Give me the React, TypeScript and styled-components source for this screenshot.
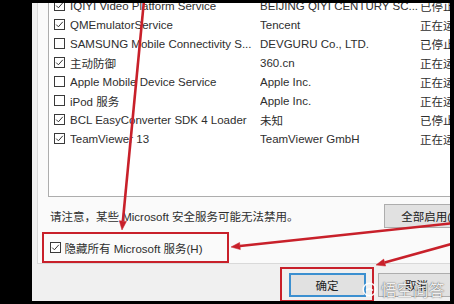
import React from "react";
import styled, { createGlobalStyle } from "styled-components";

const RED = "#c8202a";

const GlobalStyle = createGlobalStyle`
  html, body {
    margin: 0;
    padding: 0;
    background: #000;
  }
  body {
    font-family: "Liberation Sans", "Noto Sans CJK SC", sans-serif;
  }
`;

// black photo border around the cropped dialog
const Screen = styled.div`
  width: 454px;
  height: 304px;
  box-sizing: border-box;
  padding: 3px 4px 3px 32px;
  background: #000;
  overflow: hidden;
`;

const Dialog = styled.div`
  position: relative;
  width: 418px;
  height: 298px;
  overflow: hidden;
  background: #f0f0f0;
  color: #2e2e2e;
  font-size: 11.5px;
`;

const Frame = styled.div`
  width: 459px;
  display: flex;
  flex-direction: column;
`;

const TabPage = styled.div`
  margin-left: 5px;
  height: 261px;
  box-sizing: border-box;
  background: #fafafa;
  border: 1px solid #d9d9d9;
  border-top: none;
  padding: 0 10px;
  display: flex;
  flex-direction: column;
`;

const List = styled.div`
  flex-shrink: 0;
  margin-top: -8px;
  height: 202px;
  box-sizing: border-box;
  background: #fff;
  border: 1px solid #adadad;
`;

const Row = styled.div`
  display: grid;
  grid-template-columns: 16px 190px 160px 1fr;
  align-items: center;
  height: 19px;
  padding-left: 5px;
  white-space: nowrap;
`;

const Cell = styled.span`
  overflow: hidden;
`;

const Box = styled.span`
  display: inline-flex;
  align-items: center;
  justify-content: center;
  width: 11px;
  height: 11px;
  box-sizing: border-box;
  border: 1px solid #3a3a3a;
  background: #fff;
`;

const NoteRow = styled.div`
  flex-shrink: 0;
  margin-top: 7px;
  height: 24px;
  display: flex;
  align-items: center;
  justify-content: space-between;
  padding-left: 2px;
`;

const PushButton = styled.div<{ $primary?: boolean; $width: number }>`
  width: ${(p) => p.$width}px;
  height: 24px;
  box-sizing: border-box;
  display: flex;
  align-items: center;
  justify-content: center;
  flex-shrink: 0;
  background: #e1e1e1;
  border: ${(p) => (p.$primary ? "2px solid #3b8fd0" : "1px solid #adadad")};
  color: #222;
  white-space: nowrap;
`;

// red annotation frames drawn on the screenshot
const Highlight = styled.div`
  box-sizing: border-box;
  border: 2.5px solid ${RED};
  display: flex;
  align-items: center;
`;

const HideMsRow = styled(Highlight)`
  margin-top: 4px;
  margin-left: -6px;
  width: 187px;
  height: 31px;
  padding-left: 5.5px;
  gap: 4px;
`;

const OkFrame = styled(Highlight)`
  padding: 3.5px 6.5px;
`;

const Footer = styled.div`
  display: flex;
  align-items: center;
  gap: 4px;
  padding: 3px 0 0 248px;
`;

const Overlay = styled.svg`
  position: absolute;
  left: 0;
  top: 0;
  pointer-events: none;
`;

const Watermark = styled.div`
  position: absolute;
  left: 330px;
  top: 275px;
  display: flex;
  align-items: center;
  gap: 4px;
  color: rgba(255, 255, 255, 0.92);
  font-family: "Noto Sans CJK SC", sans-serif;
  font-size: 15.5px;
  letter-spacing: 0.5px;
  text-shadow: 0 0 1px rgba(0, 0, 0, 0.6), 0 0 2px rgba(0, 0, 0, 0.35);
`;

const Check = ({ on }: { on: boolean }) => (
  <Box>
    {on && (
      <svg width="9" height="9" viewBox="0 0 9 9">
        <polyline points="1.2,4.6 3.4,6.8 7.8,1.8" fill="none" stroke="#333" strokeWidth="1" />
      </svg>
    )}
  </Box>
);

const services = [
  { on: true, name: "IQIYI Video Platform Service", maker: "BEIJING QIYI CENTURY SC...", state: "已停止" },
  { on: true, name: "QMEmulatorService", maker: "Tencent", state: "正在运行" },
  { on: false, name: "SAMSUNG Mobile Connectivity S...", maker: "DEVGURU Co., LTD.", state: "已停止" },
  { on: true, name: "主动防御", maker: "360.cn", state: "正在运行" },
  { on: false, name: "Apple Mobile Device Service", maker: "Apple Inc.", state: "正在运行" },
  { on: false, name: "iPod 服务", maker: "Apple Inc.", state: "正在运行" },
  { on: true, name: "BCL EasyConverter SDK 4 Loader", maker: "未知", state: "已停止" },
  { on: true, name: "TeamViewer 13", maker: "TeamViewer GmbH", state: "正在运行" },
];

// straight red arrow, head at (x2, y2)
const Arrow = ({ x1, y1, x2, y2 }: { x1: number; y1: number; x2: number; y2: number }) => {
  const len = Math.hypot(x2 - x1, y2 - y1);
  const ux = (x2 - x1) / len;
  const uy = (y2 - y1) / len;
  const bx = x2 - ux * 9;
  const by = y2 - uy * 9;
  const nx = -uy * 3.6;
  const ny = ux * 3.6;
  return (
    <g fill={RED} stroke={RED}>
      <line x1={x1} y1={y1} x2={bx} y2={by} strokeWidth="2.6" />
      <polygon points={`${x2},${y2} ${bx + nx},${by + ny} ${bx - nx},${by - ny}`} strokeWidth="0.5" />
    </g>
  );
};

const WukongLogo = () => (
  <svg width="15" height="15" viewBox="0 0 15 15">
    <circle cx="7.5" cy="7.5" r="6.3" fill="none" stroke="rgba(255,255,255,0.9)" strokeWidth="1.6" />
    <path d="M4 8.6 Q7.5 5 11 8.6" fill="none" stroke="rgba(255,255,255,0.9)" strokeWidth="1.5" />
  </svg>
);

export default function App() {
  return (
    <>
      <GlobalStyle />
      <Screen>
        <Dialog>
          <Frame>
            <TabPage>
              <List>
                {services.map((s) => (
                  <Row key={s.name}>
                    <Check on={s.on} />
                    <Cell>{s.name}</Cell>
                    <Cell>{s.maker}</Cell>
                    <Cell>{s.state}</Cell>
                  </Row>
                ))}
              </List>
              <NoteRow>
                <span>请注意，某些 Microsoft 安全服务可能无法禁用。</span>
                <PushButton $width={96}>全部启用(E)</PushButton>
              </NoteRow>
              <HideMsRow>
                <Check on />
                <span>隐藏所有 Microsoft 服务(H)</span>
              </HideMsRow>
            </TabPage>
            <Footer>
              <OkFrame>
                <PushButton $primary $width={77}>确定</PushButton>
              </OkFrame>
              <PushButton $width={77}>取消</PushButton>
            </Footer>
          </Frame>
          <Overlay width="418" height="298" viewBox="0 0 418 298">
            <Arrow x1={112.7} y1={-10} x2={90} y2={227} />
            <Arrow x1={428} y1={219.4} x2={199} y2={244} />
            <Arrow x1={428} y1={238.5} x2={344} y2={262} />
          </Overlay>
          <Watermark>
            <WukongLogo />
            <span>悟空问答</span>
          </Watermark>
        </Dialog>
      </Screen>
    </>
  );
}
